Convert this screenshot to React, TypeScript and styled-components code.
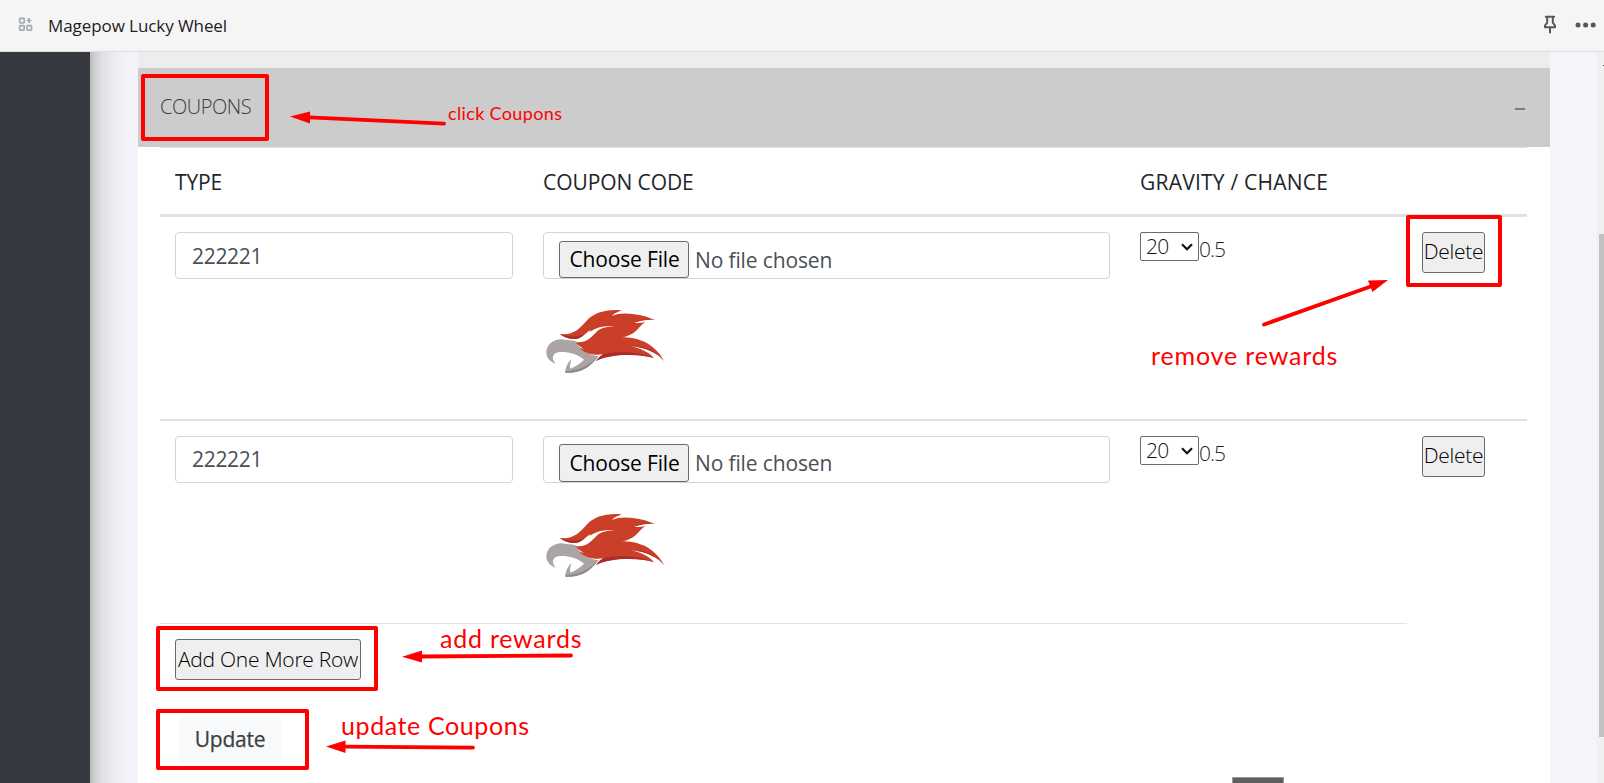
import React from 'react';
import styled, { createGlobalStyle } from 'styled-components';

const GlobalStyle = createGlobalStyle`
  *, *::before, *::after { box-sizing: border-box; }
  body {
    margin: 0;
    overflow: hidden;
    font-family: 'Open Sans', 'Noto Sans', sans-serif;
    font-size: 21px;
    color: #212529;
  }
`;

const Page = styled.div`
  position: relative;
  display: flex;
  flex-direction: column;
  height: 783px;
  overflow: hidden;
  background: #fff;
`;

const TopBar = styled.header`
  display: flex;
  align-items: center;
  height: 52px;
  flex: none;
  padding: 0 7px 0 18px;
  background: #f5f5f6;
  border-bottom: 1px solid #dcdcdd;
`;

const AppTitle = styled.h1`
  flex: 1;
  margin: 0 0 0 15px;
  font-size: 17px;
  font-weight: 400;
  line-height: 50px;
  letter-spacing: -0.08px;
  color: #1d2025;
`;

const BarIcon = styled.svg`
  flex: none;
  display: block;
  margin-bottom: 2px;
`;

const PinIcon = styled(BarIcon)`
  margin-right: 18px;
`;

const Body = styled.div`
  display: flex;
  flex: 1;
  min-height: 0;
`;

const Sidebar = styled.nav`
  width: 90px;
  flex: none;
  background: #363940;
`;

const Gutter = styled.div`
  width: 48px;
  flex: none;
  background: linear-gradient(to right, #bcbcbf 0, #d0d0d3 5px, #e1e2e6 13px, #ebecf2 24px, #f2f3f9 36px, #f4f5fb 48px);
`;

const Main = styled.main`
  display: flex;
  flex-direction: column;
  width: 1412px;
  flex: none;
  background: #fff;
`;

const PanelGap = styled.div`
  height: 16px;
  flex: none;
  background: #ededed;
`;

const PanelHeader = styled.div`
  display: flex;
  justify-content: space-between;
  align-items: center;
  height: 79px;
  flex: none;
  padding: 0 25px 2px 22px;
  background: #ccc;
`;

const PanelTitle = styled.h2`
  margin: 0;
  font-size: 20px;
  font-weight: 300;
  letter-spacing: -0.45px;
  color: #3c3c3c;
`;

const Collapse = styled.span`
  width: 10px;
  height: 2px;
  margin-top: 5px;
  background: #7c7c7c;
`;

const Table = styled.div`
  margin: 0 23px 0 22px;
  border-top: 1px solid #dee2e6;
`;

const Row = styled.div<{ $rule?: number }>`
  display: grid;
  grid-template-columns: 368px 597px 282px 120px;
  height: ${(p) => 202 + (p.$rule ?? 0)}px;
  border-bottom: ${(p) => p.$rule ?? 0}px solid #dee2e6;
`;

const HeadRow = styled(Row)`
  height: 69px;
  border-bottom: 3px solid #dee2e6;
`;

const HeadCell = styled.div<{ $spacing?: number }>`
  padding: 0 15px;
  line-height: 68px;
  letter-spacing: ${(p) => p.$spacing ?? 0}px;
`;

const Cell = styled.div`
  padding: 15px;
`;

const ChanceCell = styled(Cell)`
  display: flex;
  align-items: flex-start;
`;

const Field = styled.div<{ $line?: number }>`
  display: flex;
  height: 47px;
  border: 1px solid #ced4da;
  border-radius: 4px;
  padding: 0 16px;
  line-height: ${(p) => p.$line ?? 45}px;
  color: #495057;
  letter-spacing: -0.3px;
`;

const FileField = styled(Field)<{ $drop: number }>`
  align-items: flex-start;
  padding: ${(p) => p.$drop}px 15px 0;
  line-height: 38px;
  letter-spacing: -0.13px;
  overflow: hidden;
`;

const Button = styled.button`
  display: block;
  margin: 0;
  padding: 0;
  border: 1px solid #6b6b6b;
  border-radius: 3px;
  background: #efefef;
  color: #000;
  font: inherit;
  white-space: nowrap;
  text-align: center;
`;

const FileButton = styled(Button)<{ $height: number }>`
  width: 130px;
  flex: none;
  height: ${(p) => p.$height}px;
  padding: 0 0 1px 1px;
  margin-right: 6px;
  line-height: 32px;
  letter-spacing: -0.15px;
`;

const LightButton = styled(Button)<{ $width: number; $lift?: number }>`
  width: ${(p) => p.$width}px;
  height: 41px;
  padding-bottom: ${(p) => p.$lift ?? 2}px;
  font-weight: 300;
  letter-spacing: -0.25px;
`;

const UpdateButton = styled(Button)`
  width: 102px;
  height: 47px;
  margin: 21px 0 0 41px;
  padding-bottom: 2px;
  border: 0;
  border-radius: 4px;
  background: #f8f9fa;
  color: #3c3f42;
  -webkit-text-stroke: 0.25px #3c3f42;
  letter-spacing: -0.25px;
`;

const Select = styled.div`
  display: flex;
  justify-content: space-between;
  align-items: center;
  width: 59px;
  height: 29px;
  padding: 0 5px;
  border: 1px solid #6b6b6b;
  border-radius: 2px;
  font-weight: 300;
  line-height: 27px;
  letter-spacing: -0.7px;
  color: #111;
`;

const Chance = styled.span`
  font-weight: 300;
  line-height: 34px;
  letter-spacing: -1px;
`;

const Logo = styled.svg`
  display: block;
  width: 123px;
  height: 66px;
  margin-top: 29px;
`;

const Foot = styled.div`
  width: 1247px;
  border-top: 1px solid #dee2e6;
  padding: 15px 15px;
`;

const RightGutter = styled.div`
  flex: 1;
  background: #f4f5fb;
`;

const ScrollTrack = styled.div`
  width: 7px;
  flex: none;
  padding: 182px 0 0 2px;
  background: #f0f0f0;
`;

const ScrollThumb = styled.div`
  height: 503px;
  background: #c1c1c1;
`;

const Popup = styled.div`
  position: absolute;
  left: 1232px;
  top: 777px;
  width: 52px;
  height: 10px;
  border: 1px solid #9a9a9a;
  background: #5f5f5f;
`;

const ScrollMark = styled.div`
  position: absolute;
  left: 1603px;
  top: 65px;
  width: 1px;
  height: 1px;
  background: #444;
`;

const Annotations = styled.div`
  position: absolute;
  inset: 0;
  pointer-events: none;
`;

const Arrows = styled.svg`
  position: absolute;
  inset: 0;
`;

const Highlight = styled.div<{ $x: number; $y: number; $w: number; $h: number }>`
  position: absolute;
  left: ${(p) => p.$x}px;
  top: ${(p) => p.$y}px;
  width: ${(p) => p.$w}px;
  height: ${(p) => p.$h}px;
  border: 4px solid #f00;
  border-radius: 2px;
`;

const Note = styled.span<{ $x: number; $y: number; $size?: number; $spacing: number }>`
  position: absolute;
  left: ${(p) => p.$x}px;
  top: ${(p) => p.$y}px;
  font-family: Lato, sans-serif;
  font-size: ${(p) => p.$size ?? 25}px;
  line-height: 30px;
  letter-spacing: ${(p) => p.$spacing}px;
  white-space: nowrap;
  color: #f00;
`;

const Bird = () => (
  <Logo viewBox="39 24 369 198" preserveAspectRatio="none">
    <path
      fill="#aba3a4"
      d="M94 118C70 118 48 134 49 160C50 175 62 187 77 191C66 178 66 168 76 160C90 152 136 156 162 179C150 191 136 200 121 206C118 197 122 188 124 178C113 188 106 202 106 218C140 220 170 208 188 188C194 181 200 174 206 168C180 168 150 150 137 124C125 120 108 121 94 118Z"
    />
    <path fill="#918889" d="M106 213C140 214 175 200 206 168C180 205 145 222 106 218Z" />
    <path
      fill="#cb3f29"
      d="M90 102C130 106 150 85 170 62C190 40 225 27 275 31C260 37 250 42 246 48C262 42 275 40 290 41C320 41 350 48 375 60C350 58 330 62 313 68C325 70 335 68 345 66C335 72 328 85 315 95C305 103 290 110 275 112C320 112 370 125 403 184C385 160 350 142 303 138C330 146 358 155 372 175C330 160 240 160 198 183C207 172 213 166 220 163C190 168 160 158 148 143L161 147C146 137 140 132 138 126C170 130 185 110 200 95C215 82 235 80 252 79C225 75 200 82 178 96L182 89C165 101 155 114 137 117C125 118 105 115 90 102Z"
    />
    <path fill="#a92d27" d="M90 102C115 112 145 112 165 101C155 112 145 117 134 117C118 117 103 113 90 102Z" />
    <path fill="#a92d27" d="M198 183C207 172 215 165 222 162C260 154 330 154 372 175C325 160 240 162 198 183Z" />
    <path fill="#a92d27" d="M303 138C345 138 380 151 403 184C385 160 350 144 303 138ZM313 68C325 59 350 55 375 60C350 58 330 62 313 68Z" />
  </Logo>
);

const coupons = [
  { type: '222221', value: '20', chance: '0.5', line: 47, drop: 8, buttonHeight: 37, rule: 2 },
  { type: '222221', value: '20', chance: '0.5', line: 45, drop: 7, buttonHeight: 38, rule: 0 },
];

export default function App() {
  return (
    <>
      <GlobalStyle />
      <Page>
        <TopBar>
          <BarIcon width="15" height="15" viewBox="0 0 15 15" fill="none" stroke="#a3abb8" strokeWidth="1.7">
            <rect x="1.7" y="1.3" width="4.5" height="4.5" rx="0.6" />
            <rect x="1.7" y="8.6" width="4.5" height="4.5" rx="0.6" />
            <rect x="9" y="8.6" width="4.5" height="4.5" rx="0.6" />
            <path d="M11 1v5M8.5 3.5h5" />
          </BarIcon>
          <AppTitle>Magepow Lucky Wheel</AppTitle>
          <PinIcon width="14" height="19" viewBox="0 0 14 19" fill="none" stroke="#54575c" strokeWidth="2">
            <path d="M2.8 1.7h8.4M4.2 2v5.600l-2.200 2.900v1.800h10v-1.800l-2.200-2.900V2" strokeLinejoin="round" strokeLinecap="round" />
            <path d="M7 13v5.2" />
          </PinIcon>
          <BarIcon width="22" height="6" viewBox="0 0 22 6" fill="#54575c">
            <circle cx="3" cy="3" r="2.5" />
            <circle cx="10.6" cy="3" r="2.5" />
            <circle cx="18.2" cy="3" r="2.5" />
          </BarIcon>
        </TopBar>
        <Body>
          <Sidebar />
          <Gutter />
          <Main>
            <PanelGap />
            <PanelHeader>
              <PanelTitle>COUPONS</PanelTitle>
              <Collapse />
            </PanelHeader>
            <Table>
              <HeadRow>
                <HeadCell $spacing={-0.15}>TYPE</HeadCell>
                <HeadCell $spacing={-0.08}>COUPON CODE</HeadCell>
                <HeadCell $spacing={0.22}>GRAVITY / CHANCE</HeadCell>
                <HeadCell />
              </HeadRow>
              {coupons.map((c, i) => (
                <Row key={i} $rule={c.rule}>
                  <Cell>
                    <Field $line={c.line}>{c.type}</Field>
                  </Cell>
                  <Cell>
                    <FileField $drop={c.drop}>
                      <FileButton $height={c.buttonHeight}>Choose File</FileButton>
                      No file chosen
                    </FileField>
                    <Bird />
                  </Cell>
                  <ChanceCell>
                    <Select>
                      {c.value}
                      <svg width="12" height="8" viewBox="0 0 12 8" fill="none" stroke="#111" strokeWidth="2.2">
                        <path d="M1 1.2l5 5 5-5" />
                      </svg>
                    </Select>
                    <Chance>{c.chance}</Chance>
                  </ChanceCell>
                  <Cell>
                    <LightButton $width={63} $lift={4}>Delete</LightButton>
                  </Cell>
                </Row>
              ))}
              <Foot>
                <LightButton $width={186}>Add One More Row</LightButton>
              </Foot>
            </Table>
            <UpdateButton>Update</UpdateButton>
          </Main>
          <RightGutter />
          <ScrollTrack>
            <ScrollThumb />
          </ScrollTrack>
        </Body>
        <Popup />
        <ScrollMark />
        <Annotations>
          <Highlight $x={141} $y={74} $w={128} $h={67} />
          <Highlight $x={1406} $y={215} $w={96} $h={72} />
          <Highlight $x={156} $y={626} $w={222} $h={65} />
          <Highlight $x={156} $y={709} $w={153} $h={61} />
          <Arrows width="1604" height="783" stroke="#f00" strokeWidth="3.8" strokeLinecap="round">
            <path d="M309 117.3L444 123.7M1264 324.5L1372 286M420 656.5L571 655.5M344 746.6L473 747.6" />
            <path stroke="none" fill="#f00" d="M290 116.5L310 111.5V123.5ZM1388 280L1368 280.5L1372.5 292ZM402 656.8L422 650.5V662.5ZM326 746.5L345.500 740.500V753Z" />
          </Arrows>
          <Note $x={448} $y={98} $size={18} $spacing={0.35}>click Coupons</Note>
          <Note $x={1151} $y={340} $spacing={0.85}>remove rewards</Note>
          <Note $x={440} $y={623} $spacing={0.77}>add rewards</Note>
          <Note $x={341} $y={710} $spacing={0.6}>update Coupons</Note>
        </Annotations>
      </Page>
    </>
  );
}
